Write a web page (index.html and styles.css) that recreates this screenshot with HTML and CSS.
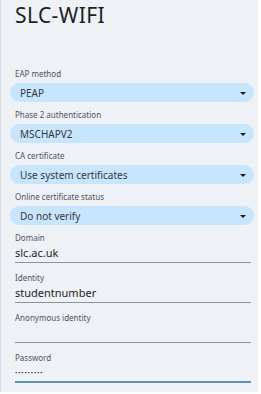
FILE: index.html
```html
<!DOCTYPE html>
<html>
<head>
<meta charset="utf-8">
<link rel="stylesheet" href="styles.css">
</head>
<body>
<div class="panel">
  <h1 class="title">SLC-WIFI</h1>
  <div class="field">
    <div class="label">EAP method</div>
    <div class="select"><span>PEAP</span><span class="arrow"></span></div>
  </div>
  <div class="field">
    <div class="label">Phase 2 authentication</div>
    <div class="select"><span>MSCHAPV2</span><span class="arrow"></span></div>
  </div>
  <div class="field">
    <div class="label">CA certificate</div>
    <div class="select"><span>Use system certificates</span><span class="arrow"></span></div>
  </div>
  <div class="field">
    <div class="label">Online certificate status</div>
    <div class="select"><span>Do not verify</span><span class="arrow"></span></div>
  </div>
  <div class="tfield">
    <div class="label">Domain</div>
    <div class="input">slc.ac.uk</div>
  </div>
  <div class="tfield">
    <div class="label">Identity</div>
    <div class="input">studentnumber</div>
  </div>
  <div class="tfield">
    <div class="label">Anonymous identity</div>
    <div class="input"></div>
  </div>
  <div class="tfield">
    <div class="label">Password</div>
    <div class="input active dots">•••••••••</div>
  </div>
</div>
</body>
</html>
```
FILE: styles.css
```css
html, body {
  margin: 0;
  padding: 0;
  background: #ffffff;
}
body {
  width: 261px;
  height: 394px;
  overflow: hidden;
  font-family: "Noto Sans", "DejaVu Sans", sans-serif;
}
.panel {
  width: 258px;
  height: 392px;
  box-sizing: border-box;
  background: #eef1f6;
  border-left: 1px solid #d9dde3;
  padding: 3px 0 0 14px;
}
.title {
  margin: 0 0 41px 0;
  font-size: 21px;
  font-weight: 400;
  line-height: 24px;
  color: #1e1f22;
  letter-spacing: 0.4px;
}
.label {
  height: 12px;
  line-height: 12px;
  font-size: 8px;
  color: #50545a;
}
.field {
  margin-bottom: 7px;
}
.field .label {
  margin-bottom: 3px;
}
.select {
  margin-left: -5px;
  width: 244px;
  height: 19px;
  box-sizing: border-box;
  border-radius: 10px;
  background: #c7e6fd;
  display: flex;
  align-items: center;
  justify-content: space-between;
  padding: 0 8px 0 10px;
  font-size: 10px;
  color: #33363a;
}
.arrow {
  width: 0;
  height: 0;
  border-left: 3px solid transparent;
  border-right: 3px solid transparent;
  border-top: 3px solid #1a1b1e;
  margin-top: 1px;
}
.tfield {
  margin-bottom: 9px;
}
.input {
  width: 236px;
  height: 18px;
  line-height: 18px;
  border-bottom: 1px solid #8d939a;
  font-size: 11px;
  color: #1e1f22;
}
.input.active {
  height: 17px;
  border-bottom: 2px solid #5b93bd;
}
.dots {
  font-size: 6px;
  letter-spacing: 0.9px;
}
```
